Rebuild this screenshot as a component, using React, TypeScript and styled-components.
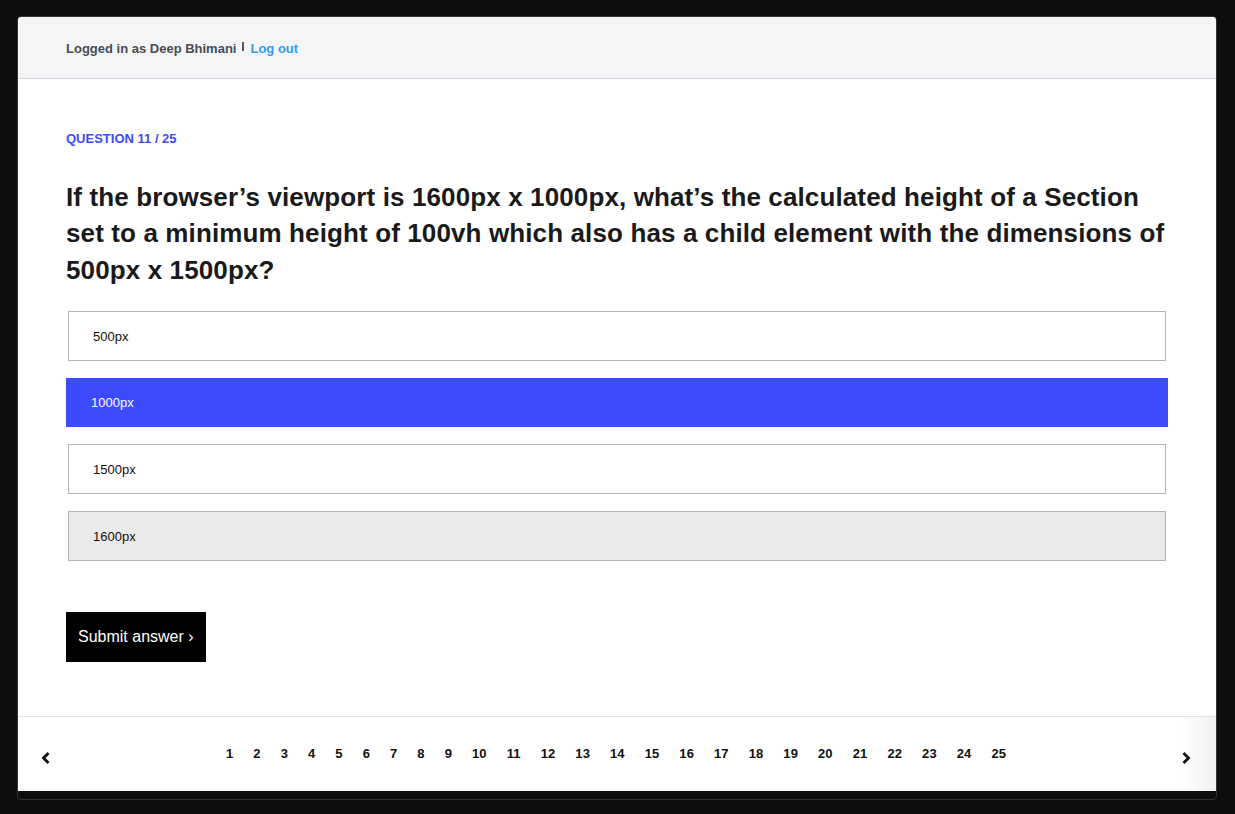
import React, { useState } from "react";
import styled, { createGlobalStyle } from "styled-components";

const GlobalStyle = createGlobalStyle`
  html, body {
    margin: 0;
    padding: 0;
    background: #0d0d0d;
    font-family: "Liberation Sans", Arial, Helvetica, sans-serif;
  }
  * {
    box-sizing: border-box;
  }
`;

const Screen = styled.div`
  width: 1235px;
  height: 814px;
  padding: 16px 0 0 17px;
  background: #0d0d0d;
`;

const Window = styled.div`
  width: 1200px;
  height: 784px;
  display: flex;
  flex-direction: column;
  border: 1px solid #333333;
  border-radius: 4px;
  background: #0d0d0d;
  padding-bottom: 8px;
  overflow: hidden;
`;

const Header = styled.header`
  height: 62px;
  flex-shrink: 0;
  display: flex;
  align-items: center;
  padding: 1px 0 0 48px;
  background: #f4f5f7;
  border-bottom: 1px solid #d6d9dd;
  font-size: 13px;
  font-weight: 700;
  color: #4b4b52;
`;

const Divider = styled.span`
  display: inline-block;
  width: 2px;
  height: 9px;
  margin: -4px 6px 0 6px;
  background: #55555c;
`;

const LogoutLink = styled.a`
  color: #3a98ef;
  text-decoration: none;
  cursor: pointer;
`;

const Main = styled.main`
  flex: 1;
  background: #ffffff;
  padding: 52px 48px 0 48px;
`;

const QuestionLabel = styled.div`
  font-size: 13px;
  line-height: 15px;
  font-weight: 700;
  color: #3d4bff;
  text-transform: uppercase;
`;

const QuestionTitle = styled.h1`
  margin: 33px 0 23px 0;
  font-size: 26px;
  line-height: 36.4px;
  font-weight: 700;
  letter-spacing: 0.12px;
  color: #1a1a1a;
`;

const AnswerList = styled.div`
  display: flex;
  flex-direction: column;
  gap: 17px;
`;

const Answer = styled.div<{ $selected?: boolean; $hover?: boolean }>`
  display: flex;
  align-items: center;
  height: ${(p) => (p.$selected ? "49px" : "50px")};
  margin: ${(p) => (p.$selected ? "0" : "0 2px")};
  padding-left: 24px;
  font-size: 13px;
  color: ${(p) => (p.$selected ? "#ffffff" : "#111111")};
  background: ${(p) =>
    p.$selected ? "#3d4bff" : p.$hover ? "#eaeaea" : "#ffffff"};
  border: 1px solid ${(p) => (p.$selected ? "#3d4bff" : "#b5b5b5")};
  cursor: pointer;
`;

const SubmitButton = styled.button`
  margin-top: 51px;
  width: 140px;
  height: 50px;
  padding: 0 12px;
  border: none;
  background: #000000;
  color: #ffffff;
  font-family: inherit;
  font-size: 16px;
  text-align: left;
  cursor: pointer;
`;

const Footer = styled.footer`
  height: 75px;
  flex-shrink: 0;
  display: grid;
  grid-template-columns: 1fr auto 1fr;
  align-items: center;
  padding: 0 25px 0 23px;
  border-top: 1px solid #dde3e8;
  background: linear-gradient(90deg, #ffffff calc(100% - 36px), #f1f1f1);
`;

const ArrowButton = styled.button<{ $right?: boolean }>`
  justify-self: ${(p) => (p.$right ? "end" : "start")};
  display: flex;
  padding: 0;
  margin-top: 7px;
  border: none;
  background: none;
  cursor: pointer;
`;

const Pages = styled.nav`
  display: flex;
  margin-top: -2px;
`;

const PageNumber = styled.span<{ $active?: boolean }>`
  padding: 0 10px;
  font-size: 13px;
  font-weight: 700;
  letter-spacing: 0.1px;
  color: #111111;
  cursor: pointer;
`;

const Chevron = ({ right }: { right?: boolean }) => (
  <svg width="10" height="14" viewBox="0 0 10 14">
    <polyline
      points={right ? "2.5,2 7.5,7 2.5,12" : "7.5,2 2.5,7 7.5,12"}
      fill="none"
      stroke="#111"
      strokeWidth="2.8"
      strokeLinejoin="miter"
    />
  </svg>
);

const answers = ["500px", "1000px", "1500px", "1600px"];

export default function App() {
  const [selected, setSelected] = useState(1);
  const [current] = useState(11);

  return (
    <Screen>
      <GlobalStyle />
      <Window>
        <Header>
          Logged in as Deep Bhimani
          <Divider />
          <LogoutLink>Log out</LogoutLink>
        </Header>
        <Main>
          <QuestionLabel>Question {current} / 25</QuestionLabel>
          <QuestionTitle>
            If the browser’s viewport is 1600px x 1000px, what’s the calculated
            height of a Section set to a minimum height of 100vh which also has
            a child element with the dimensions of 500px x 1500px?
          </QuestionTitle>
          <AnswerList>
            {answers.map((a, i) => (
              <Answer
                key={a}
                $selected={i === selected}
                $hover={i === 3}
                onClick={() => setSelected(i)}
              >
                {a}
              </Answer>
            ))}
          </AnswerList>
          <SubmitButton>Submit answer ›</SubmitButton>
        </Main>
        <Footer>
          <ArrowButton>
            <Chevron />
          </ArrowButton>
          <Pages>
            {Array.from({ length: 25 }, (_, i) => (
              <PageNumber key={i} $active={i + 1 === current}>
                {i + 1}
              </PageNumber>
            ))}
          </Pages>
          <ArrowButton $right>
            <Chevron right />
          </ArrowButton>
        </Footer>
      </Window>
    </Screen>
  );
}
